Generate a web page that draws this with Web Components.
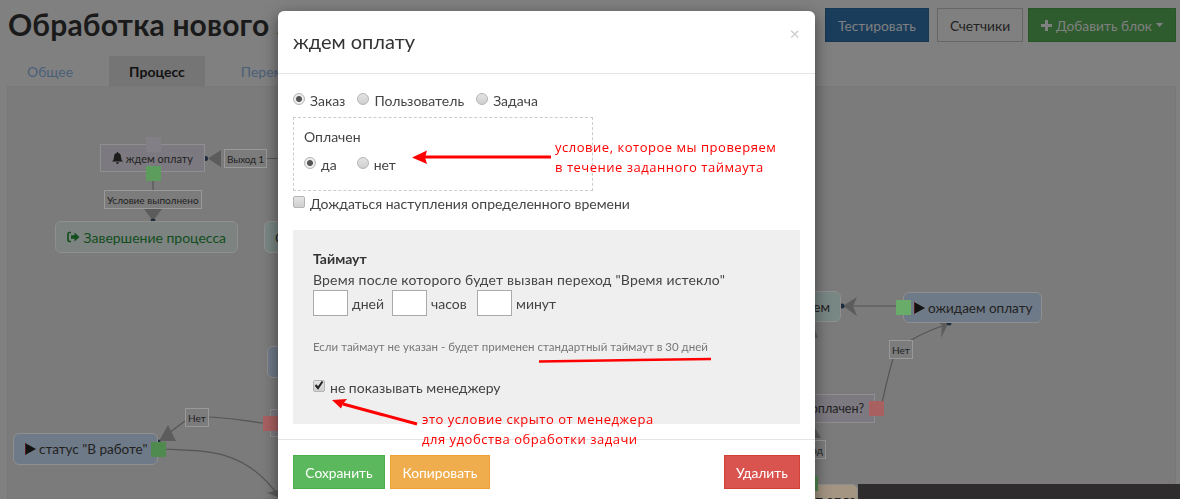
<!DOCTYPE html>
<html lang="ru">
<head>
<meta charset="utf-8">
<title>Обработка нового заказа</title>
<style>
html, body { margin: 0; height: 100%; overflow: hidden; background: #808080; }
body { font: 14px "Lato", "Open Sans", sans-serif; color: #333; }
</style>
</head>
<body>
<crm-page>
  <crm-header slot="top">
    <span slot="title">Обработка нового заказа</span>
    <crm-btn kind="primary" style="--w:104px">Тестировать</crm-btn>
    <crm-btn kind="ghost" style="--w:86px;--ml:8px">Счетчики</crm-btn>
    <crm-btn kind="add" style="--w:148px;--ml:5px"><flow-icon name="plus"></flow-icon>&nbsp;Добавить блок&nbsp;<flow-icon name="caret"></flow-icon></crm-btn>
  </crm-header>
  <crm-tabs slot="top">
    <a>Общее</a><a class="on">Процесс</a><a>Переменные</a>
  </crm-tabs>
  <flow-canvas>
    <flow-node style="--x:100px;--y:144px;--w:105px;--h:28px;--bg:#7c7980;--fs:11px"><flow-icon name="bell"></flow-icon>&nbsp;ждем оплату</flow-node>
    <flow-node kind="round" style="--x:55px;--y:221px;--w:183px;--h:32px;--bg:#7d8381;--fg:#124d1c;--fs:14px"><flow-icon name="exit"></flow-icon>&nbsp;Завершение процесса</flow-node>
    <flow-node kind="round" style="--x:264px;--y:221px;--w:120px;--h:32px;--bg:#788684;--jc:flex-start;--pl:10px;--fs:14px">Статус</flow-node>
    <flow-node kind="round" style="--x:267px;--y:346px;--w:120px;--h:32px;--bg:#6f7a88"></flow-node>
    <flow-node style="--x:270px;--y:409px;--w:120px;--h:28px;--bg:#7c7980"></flow-node>
    <flow-node kind="round" style="--x:13px;--y:433px;--w:145px;--h:32px;--bg:#6f7a88;--fs:13.500px"><flow-icon name="play"></flow-icon>&nbsp;статус "В работе"</flow-node>
    <flow-node kind="round" style="--x:720px;--y:291px;--w:121px;--h:31px;--bg:#788684;--fs:13.500px;--jc:flex-end;--pr:10px">проверяем</flow-node>
    <flow-node kind="round" style="--x:903px;--y:292px;--w:139px;--h:31px;--bg:#6f7a88;--fs:13.500px"><flow-icon name="play"></flow-icon>&nbsp;ожидаем оплату</flow-node>
    <flow-node style="--x:740px;--y:394px;--w:135px;--h:29px;--bg:#7c7980;--jc:flex-end;--pr:10px;--fs:12.500px">Заказ оплачен?</flow-node>
    <flow-node kind="round" style="--x:700px;--y:484px;--w:158px;--h:32px;--bg:#a39582;--fs:13.500px;--jc:flex-end;--pr:1px">ждем от опла</flow-node>

    <flow-label style="--x:224px;--y:149px;--ls:-.2px">Выход 1</flow-label>
    <flow-label style="--x:104px;--y:190px">Условие выполнено</flow-label>
    <flow-label style="--x:185px;--y:408px">Нет</flow-label>
    <flow-label style="--x:889px;--y:340px">Нет</flow-label>
    <flow-label style="--x:790px;--y:440px">Выход</flow-label>

    <flow-port style="--x:146px;--y:137px;--c:#827f86"></flow-port>
    <flow-port style="--x:146px;--y:166px;--c:#5c9c5c"></flow-port>
    <flow-port style="--x:263px;--y:416px;--c:#a86060"></flow-port>
    <flow-port style="--x:151px;--y:442px;--c:#4f8a4f"></flow-port>
    <flow-port style="--x:896px;--y:300px;--c:#69ab69"></flow-port>
    <flow-port style="--x:869px;--y:401px;--c:#a86060"></flow-port>
    <flow-port style="--x:803px;--y:476px;--c:#4f8a4f"></flow-port>
  </flow-canvas>
  <dark-strip></dark-strip>
</crm-page>

<modal-dialog>
  <span slot="title">ждем оплату</span>
  <form-options>
    <opt-radio checked>Заказ</opt-radio>
    <opt-radio style="--ml:12px">Пользователь</opt-radio>
    <opt-radio style="--ml:12px">Задача</opt-radio>
  </form-options>
  <condition-box>
    <span slot="name">Оплачен</span>
    <opt-radio checked>да</opt-radio>
    <opt-radio style="--ml:20px">нет</opt-radio>
  </condition-box>
  <opt-check>Дождаться наступления определенного времени</opt-check>
  <timeout-panel>
    <opt-check checked slot="after">не показывать менеджеру</opt-check>
  </timeout-panel>
  <crm-btn slot="footer" kind="success" style="--w:92px">Сохранить</crm-btn>
  <crm-btn slot="footer" kind="warning" style="--w:100px;--ml:5px">Копировать</crm-btn>
  <crm-btn slot="footer" kind="danger" style="--w:76px;--ml:auto">Удалить</crm-btn>
</modal-dialog>

<red-notes></red-notes>

<script>
function define(name, css, html) {
  customElements.define(name, class extends HTMLElement {
    constructor() {
      super();
      this.attachShadow({mode: "open"}).innerHTML = `<style>${css}</style>${typeof html == "function" ? html(this) : html}`;
    }
  });
}

const icons = {
  play: `<svg width="12" height="12" viewBox="0 0 12 12"><path d="M1 0L12 6L1 12Z" fill="#111"/><path d="M1 0V12L2 11.500V.5Z" fill="#5a1a1a"/></svg>`,
  exit: `<svg width="13" height="12" viewBox="0 0 13 12"><path d="M4 1.500H2.500Q1 1.500 1 3V9Q1 10.500 2.500 10.500H4" fill="none" stroke="currentColor" stroke-width="1.600"/><path d="M4 4.200H7.500V1.500L12.500 6L7.500 10.500V7.800H4Z" fill="currentColor"/></svg>`,
  bell: `<svg width="11" height="12" viewBox="0 0 11 12"><path d="M5.500 0Q6.300 0 6.300 1Q9 1.600 9 5Q9 8 11 9.500H0Q2 8 2 5Q2 1.600 4.700 1Q4.700 0 5.500 0ZM4 10.300H7Q6.800 12 5.500 12Q4.200 12 4 10.300Z" fill="#1c1c1c"/></svg>`,
  plus: `<svg width="11" height="11" viewBox="0 0 11 11"><path d="M4 0H7V4H11V7H7V11H4V7H0V4H4Z" fill="currentColor"/></svg>`,
  caret: `<svg width="7" height="4" viewBox="0 0 7 4"><path d="M0 0H7L3.500 4Z" fill="currentColor"/></svg>`
};

define("crm-page", `
  :host { display: flex; flex-direction: column; height: 100vh; padding: 0 4px 0 7px; box-sizing: border-box; overflow: hidden; position: relative; }
`, `<slot name="top"></slot><slot></slot>`);

define("crm-header", `
  :host { display: flex; align-items: flex-start; height: 56px; padding-top: 8px; box-sizing: border-box; }
  .title { flex: 1; margin-left: 1px; margin-top: -1px; font-size: 30px; line-height: 34px; font-weight: 700; letter-spacing: .15px; color: #1a1a1a; white-space: nowrap; }
`, `<div class="title"><slot name="title"></slot></div><slot></slot>`);

define("crm-btn", `
  :host { display: inline-flex; align-items: center; justify-content: center; box-sizing: border-box; width: var(--w); height: 34px; margin-left: var(--ml, 0); border: 1px solid #ccc; background: #fff; color: #333; font-size: 13.800px; white-space: nowrap; }
  :host([kind=ghost]) { background: transparent; border-color: #666; color: #222; }
  :host([kind=primary]) { background: #1a3d5c; border-color: #173752; color: #808080; }
  :host([kind=add]) { background: #2e5c2e; border-color: #265726; color: #808080; }
  :host([kind=success]) { background: #5cb85c; border-color: #4cae4c; color: #fff; }
  :host([kind=warning]) { background: #f0ad4e; border-color: #eea236; color: #fff; }
  :host([kind=danger]) { background: #d9534f; border-color: #d43f3a; color: #fff; }
`, `<slot></slot>`);

define("crm-tabs", `
  :host { display: flex; gap: 16px; height: 30px; }
  ::slotted(a) { display: flex; align-items: center; padding: 0 20px; color: #4a5f7a; }
  ::slotted(a.on) { background: #757575; color: #111; font-weight: 700; }
`, `<slot></slot>`);

define("flow-canvas", `
  :host { display: block; flex: 1; position: relative; background: #7b7b7b; border: 1px solid #787878; box-sizing: border-box; }
  .layer { position: absolute; left: -8px; top: -87px; width: 1180px; height: 540px; }
  svg { position: absolute; left: 0; top: 0; }
`, `<div class="layer">
  <svg width="1180" height="540" fill="none" stroke="#555" stroke-width="1.200">
    <path d="M264 158.500H300"/>
    <path d="M153 181V190"/>
    <path d="M207 417C225 417 245 421 263 423"/>
    <path d="M185 421L165 436"/>
    <path d="M164 449C210 451 245 450 278 495"/>
    <path d="M842 306H896"/>
    <path d="M881 407C885 390 888 375 893 359"/>
    <path d="M911 340C920 335 930 330 945 325"/>
    <g fill="#5c5c5c" stroke="none">
      <path d="M208 158.500L221 150V167Z"/>
      <path d="M153 221L144 209H162Z"/>
      <path d="M159 441L176 441L168 425Z"/>
      <path d="M843 306L857 297L853 306L857 316Z"/>
      <path d="M949 322L933 319L942 325L941 338Z"/>
      <path d="M278 490L267 493L278 497Z"/>
      <path d="M815 330L818 338H815Z"/>
      <path d="M815 428L821 438H815Z"/>
    </g>
    <g fill="#1c2c3c" stroke="none">
      <circle cx="205.500" cy="158.500" r="2.500"/>
      <circle cx="153" cy="221" r="2.500"/>
      <circle cx="158" cy="442" r="2.500"/>
      <circle cx="842" cy="306" r="2.500"/>
      <circle cx="949" cy="323" r="2.500"/>
    </g>
  </svg>
  <slot></slot>
</div>`);

define("flow-node", `
  :host { position: absolute; left: var(--x); top: var(--y); width: var(--w); height: var(--h); box-sizing: border-box; display: flex; align-items: center; justify-content: var(--jc, center); padding: 0 var(--pr, 0) 0 var(--pl, 0); background: var(--bg); border: 1px solid #8f8f8f; color: var(--fg, #222); font-size: var(--fs, 13px); white-space: nowrap; }
  :host([kind=round]) { border-radius: 6px; }
`, `<slot></slot>`);

define("flow-label", `
  :host { position: absolute; left: var(--x); top: var(--y); height: 19px; padding: 0 2px; box-sizing: border-box; display: flex; align-items: center; background: #7c7c7c; border: 1px solid #999; color: #1f1f1f; font-size: 10px; letter-spacing: var(--ls, 0); white-space: nowrap; }
`, `<slot></slot>`);

define("flow-port", `
  :host { position: absolute; left: var(--x); top: var(--y); width: 15px; height: 15px; background: var(--c); }
`, ``);

define("flow-icon", `
  :host { display: inline-flex; }
  svg { display: block; }
`, el => icons[el.getAttribute("name")]);

define("dark-strip", `
  :host { position: absolute; left: 858px; right: 0; bottom: 0; height: 15px; background: #2e2c2c; }
`, ``);

define("modal-dialog", `
  :host { position: fixed; inset: 0; display: block; overflow: hidden; }
  .box { position: absolute; left: 278px; top: 11px; width: 537px; background: #fff; border-radius: 6px 6px 0 0; box-shadow: 0 5px 15px rgba(0,0,0,.5); }
  header { height: 63px; box-sizing: border-box; padding: 0 15px; display: flex; align-items: center; justify-content: space-between; border-bottom: 1px solid #e5e5e5; font-size: 20px; color: #333; }
  header > span:first-child { margin-top: -3px; }
  .close { color: #ccc; font-size: 18px; margin-top: -18px; }
  main { padding: 19px 15px 15px; display: flex; flex-direction: column; }
  main ::slotted(*) { flex: none; }
  footer { border-top: 1px solid #e5e5e5; padding: 15px 15px 30px; display: flex; }
`, `<div class="box">
  <header><span><slot name="title"></slot></span><span class="close">×</span></header>
  <main><slot></slot></main>
  <footer><slot name="footer"></slot></footer>
</div>`);

define("form-options", `
  :host { display: flex; height: 24px; align-items: flex-start; }
`, `<slot></slot>`);

const tick = `
  input { appearance: none; -webkit-appearance: none; margin: 0; flex: none; box-sizing: border-box; background: linear-gradient(#e4e4e4, #cfcfcf); border: 1px solid #b5b5b5; transform: translateY(-1px); }
`;

define("opt-radio", `
  :host { display: inline-flex; align-items: center; gap: 5px; margin-left: var(--ml, 0); height: 14px; color: #444; }
  ${tick}
  input { width: 12px; height: 12px; border-radius: 50%; }
  input:checked { background: radial-gradient(circle, #555 0 2.500px, #ececec 3.500px); }
`, el => `<input type="radio" ${el.hasAttribute("checked") ? "checked" : ""}><slot></slot>`);

define("opt-check", `
  :host { display: flex; align-items: center; gap: 5px; height: 14px; color: #444; }
  ${tick}
  input { width: 12px; height: 12px; border-radius: 2px; }
  .mark { display: none; position: absolute; left: 0; top: -2px; }
  :host([checked]) .mark { display: block; }
  .wrap { position: relative; display: flex; }
`, el => `<span class="wrap"><input type="checkbox" ${el.hasAttribute("checked") ? "checked" : ""}>
  <svg class="mark" width="12" height="12" viewBox="0 0 12 12"><path d="M2.500 6L5 9L9.500 2.500" fill="none" stroke="#222" stroke-width="2"/></svg></span><slot></slot>`);

define("condition-box", `
  :host { display: block; width: 300px; height: 74px; box-sizing: border-box; padding: 10px 10px 0; border: 1px dashed #ccc; margin-bottom: 5px; color: #444; }
  .name { height: 27px; }
  .row { display: flex; height: 14px; margin-top: 2px; }
`, `<div class="name"><slot name="name"></slot></div><div class="row"><slot></slot></div>`);

define("timeout-panel", `
  :host { display: block; margin-top: 20px; height: 194px; box-sizing: border-box; padding: 20px 20px 0; background: #efefef; color: #444; }
  h4 { margin: 0; font-size: 14px; line-height: 18px; color: #333; }
  p { margin: 3px 0 0; line-height: 18px; letter-spacing: .18px; }
  .times { display: flex; align-items: center; margin-top: 1px; }
  .times input { width: 35px; height: 26px; box-sizing: border-box; border: 1px solid #aaa; background: #fff; margin: 0 4px 0 0; padding: 0; }
  .times span { width: 40px; }
  small { display: block; margin: 23px 0 25px; font-size: 11.500px; line-height: 16px; color: #777; }
`, `<h4>Таймаут</h4>
<p>Время после которого будет вызван переход "Время истекло"</p>
<div class="times">
  <input type="text"><span>дней</span>
  <input type="text"><span style="width:46px">часов</span>
  <input type="text"><span>минут</span>
</div>
<small>Если таймаут не указан - будет применен стандартный таймаут в 30 дней</small>
<slot name="after"></slot>`);

define("red-notes", `
  :host { position: fixed; inset: 0; display: block; pointer-events: none; }
  svg { position: absolute; left: 0; top: 0; }
  span { position: absolute; color: #f00; font: 13px/20px "Open Sans", sans-serif; letter-spacing: .52px; white-space: nowrap; }
`, `<svg width="1180" height="499">
  <path d="M551 157H424" stroke="#f00" stroke-width="3"/>
  <path d="M412 157.500L427 150.500L425 157.500L427 164Z" fill="#f00"/>
  <path d="M539 361.500L711 359" stroke="#f00" stroke-width="2.500"/>
  <path d="M417 424L343 404" stroke="#f00" stroke-width="3"/>
  <path d="M332 400L347 399L343 404L341 408.500Z" fill="#f00"/>
</svg>
<span style="left:555px;top:137px">условие, которое мы проверяем</span>
<span style="left:555px;top:157px">в течение заданного таймаута</span>
<span style="left:422px;top:409px">это условие скрыто от менеджера</span>
<span style="left:422px;top:429px">для удобства обработки задачи</span>`);
</script>
</body>
</html>
